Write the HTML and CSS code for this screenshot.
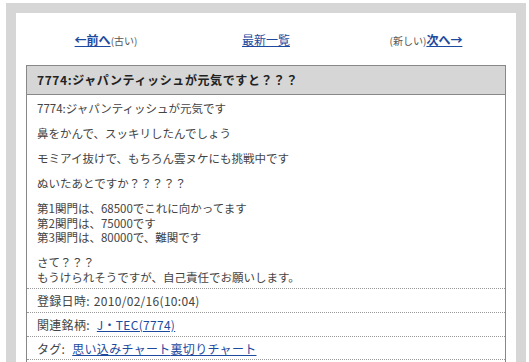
FILE: index.html
```html
<!DOCTYPE html>
<html lang="ja">
<head>
    <meta charset="UTF-8">
    <title>7774:ジャパンティッシュが元気ですと？？？</title>
    <link rel="stylesheet" href="styles.css">
</head>
<body>

<div class="frame">

    <!-- Pager -->
    <div class="pager">
        <div class="pager-cell"><a href="#" class="strong">←前へ</a><span class="note">(古い)</span></div>
        <div class="pager-cell"><a href="#">最新一覧</a></div>
        <div class="pager-cell"><span class="note">(新しい)</span><a href="#" class="strong">次へ→</a></div>
    </div>

    <!-- Entry -->
    <div class="entry">
        <h2 class="entry-title">7774:ジャパンティッシュが元気ですと？？？</h2>
        <div class="entry-body">
            <p>7774:ジャパンティッシュが元気です</p>
            <p>鼻をかんで、スッキリしたんでしょう</p>
            <p>モミアイ抜けで、もちろん雲ヌケにも挑戦中です</p>
            <p>ぬいたあとですか？？？？？</p>
            <p>第1関門は、68500でこれに向かってます<br>第2関門は、75000です<br>第3関門は、80000で、難関です</p>
            <p>さて？？？<br>もうけられそうですが、自己責任でお願いします。</p>
        </div>
        <div class="entry-meta"><span class="label">登録日時:</span>2010/02/16(10:04)</div>
        <div class="entry-meta"><span class="label">関連銘柄:</span> <a href="#">J・TEC(7774)</a></div>
        <div class="entry-meta"><span class="label">タグ:</span> <a href="#">思い込みチャート</a><a href="#">裏切りチャート</a></div>
    </div>

</div>

</body>
</html>
```

FILE: styles.css
```css
/* Basic Reset */
* {
    margin: 0;
    padding: 0;
    box-sizing: border-box;
}

body {
    font-family: "Noto Sans CJK JP", "Liberation Sans", sans-serif;
    font-size: 12px;
    color: #444;
    background-color: #fff;
    overflow: hidden;
}

a {
    color: #1d4a9e;
    text-decoration: underline;
}

/* Gray outer frame */
.frame {
    margin: 3px 3px 0 6px;
    border: 10px solid #d6d6d6;
    border-bottom: none;
    padding: 10px 10px 0 10px;
    width: 520px;
    height: 400px;
}

/* Pager */
.pager {
    display: grid;
    grid-template-columns: 1fr 1fr 1fr;
    align-items: center;
    height: 32px;
    margin-bottom: 10px;
}

.pager-cell {
    text-align: center;
}

.pager .strong {
    font-weight: bold;
}

.note {
    font-size: 10px;
    color: #555;
}

/* Entry box */
.entry {
    border: 1px solid #888;
    border-bottom: none;
    min-height: 320px;
}

.entry-title {
    background-color: #d6d6d6;
    border-bottom: 1px solid #888;
    font-size: 12px;
    font-weight: bold;
    color: #222;
    height: 29px;
    line-height: 28px;
    padding: 0 10px;
    letter-spacing: 0.6px;
}

.entry-body {
    padding: 6px 10px 4px 10px;
    line-height: 14.5px;
    font-size: 11.5px;
}

.entry-body p {
    margin-bottom: 10.5px;
}

.entry-body p:last-child {
    margin-bottom: 0;
}

.entry-meta {
    border-top: 1px dotted #999;
    height: 24px;
    line-height: 23px;
    padding: 0 10px;
    letter-spacing: 0.3px;
}

.entry-meta:last-child {
    border-bottom: 1px dotted #999;
}

.label {
    margin-right: 4px;
}
```
